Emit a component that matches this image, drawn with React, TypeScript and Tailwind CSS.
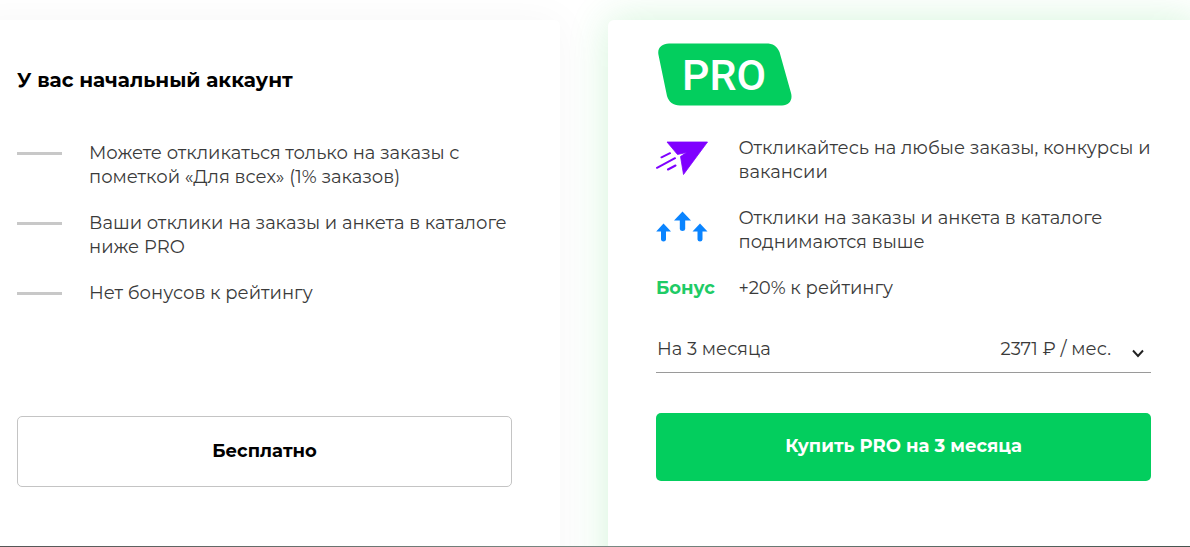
import type { ReactNode } from "react";

const freeItems: string[][] = [
  ["Можете откликаться только на заказы с", "пометкой «Для всех» (1% заказов)"],
  ["Ваши отклики на заказы и анкета в каталоге", "ниже PRO"],
  ["Нет бонусов к рейтингу"],
];

const proItems: { icon: ReactNode; lines: string[] }[] = [
  {
    icon: <PlaneIcon />,
    lines: ["Откликайтесь на любые заказы, конкурсы и", "вакансии"],
  },
  {
    icon: <ArrowsIcon />,
    lines: ["Отклики на заказы и анкета в каталоге", "поднимаются выше"],
  },
  {
    icon: <span className="text-[18px] font-bold leading-6 text-[#1fcb66]">Бонус</span>,
    lines: ["+20% к рейтингу"],
  },
];

export default function App() {
  return (
    <main className="relative h-[547px] overflow-hidden bg-white font-['Montserrat','Inter',sans-serif] text-[#3a3a3a]">
      <div className="-ml-[31px] flex w-[1230px] gap-12 pt-5">
        {/* starter plan */}
        <section className="h-[600px] w-[591px] shrink-0 rounded-md bg-white px-12 pt-[45px] shadow-[0_0_40px_rgba(0,0,0,0.04)]">
          <h2 className="whitespace-nowrap text-[20px] font-bold leading-[30px] text-black">
            У вас начальный аккаунт
          </h2>
          <ul className="mt-[46px] flex h-[275px] flex-col gap-[22px]">
            {freeItems.map((lines) => (
              <li key={lines[0]} className="flex">
                <span className="mt-[11px] h-[3px] w-[45px] shrink-0 bg-[#c8c8c8]" />
                <TextLines lines={lines} className="ml-[27px]" />
              </li>
            ))}
          </ul>
          <button className="h-[71px] w-full rounded-[5px] border border-[#c4c4c4] text-[18px] font-bold text-black">
            Бесплатно
          </button>
        </section>

        {/* PRO plan */}
        <section className="h-[600px] w-[591px] shrink-0 rounded-md bg-white px-12 pt-[23px] shadow-[0_0_40px_rgba(40,205,70,0.2)]">
          <ProBadge />
          <ul className="mt-[30px] flex flex-col gap-[22px]">
            {proItems.map(({ icon, lines }) => (
              <li key={lines[0]} className="flex">
                <div className="w-[82.5px] shrink-0">{icon}</div>
                <TextLines lines={lines} />
              </li>
            ))}
          </ul>
          <button className="mt-[34px] flex h-[38px] w-full items-start whitespace-nowrap border-b border-[#9a9a9a] pl-px pt-[2px] text-left text-[18px] leading-6">
            <span>На 3 месяца</span>
            <span className="ml-auto">2371 ₽ / мес.</span>
            <svg className="ml-[21px] mr-[7px] mt-[12px] h-[9px] w-[12px]" viewBox="0 0 12 9" fill="none" stroke="#222" strokeWidth="1.9">
              <path d="M1 1.5 6 7 11 1.5" />
            </svg>
          </button>
          <button className="mt-[39.5px] h-[68px] w-full rounded-[5px] bg-[#03ce5e] text-[18px] font-bold text-white">
            Купить PRO на 3 месяца
          </button>
        </section>
      </div>
      <div className="absolute inset-x-0 bottom-0 h-px bg-gradient-to-r from-[#555] via-[#7b8a84] to-[#46544f]" />
    </main>
  );
}

function TextLines({ lines, className }: { lines: string[]; className?: string }) {
  return (
    <p className={className}>
      {lines.map((line) => (
        <span key={line} className="block whitespace-nowrap text-[18px] leading-6">
          {line}
        </span>
      ))}
    </p>
  );
}

function ProBadge() {
  return (
    <svg className="ml-[2px] block h-[63px] w-[134px]" viewBox="0 0 134 63">
      <path
        d="M11 0.5H108C115 0.5 119 3 121.5 9L133 50C135 57 131 62.5 124 62.5H22C15 62.5 11 59 9 53L0.5 12C-1 5 4 0.5 11 0.5Z"
        fill="#03ce5e"
      />
      <text
        x="24"
        y="47"
        fill="#fff"
        fontFamily="Roboto, sans-serif"
        fontSize="42"
        fontWeight="500"
        textLength="84"
        lengthAdjust="spacingAndGlyphs"
      >
        PRO
      </text>
    </svg>
  );
}

function PlaneIcon() {
  return (
    <svg className="mt-[5px] h-[35px] w-[53px]" viewBox="0 0 53 35">
      <path
        d="M11 1H51.5L27.5 33.5 24.5 15.5 30.5 11.5 21.5 13.5Z"
        fill="#7f00ff"
        stroke="#7f00ff"
        strokeWidth="0.8"
        strokeLinejoin="round"
      />
      <path
        d="M5.5 16.3 14 12.2M1 26.8 19 17.2M12 28.5 19.5 24.5"
        fill="none"
        stroke="#7f00ff"
        strokeWidth="2"
        strokeLinecap="round"
      />
    </svg>
  );
}

function ArrowsIcon() {
  return (
    <svg className="mt-[5px] h-[32px] w-[52px]" viewBox="0 0 52 32" fill="#0a84ff">
      <path d="M26.5 0.5 35 9.5H29.2V18Q29 20 26.5 20T23.8 18V9.5H18Z" />
      <path d="M7.5 12.5 15 20.5H10V28.5Q9.8 30.5 7.5 30.5T5 28.5V20.5H0.2Z" />
      <path d="M44 12.5 51.5 20.5H46.5V28.5Q46.3 30.5 44 30.5T41.5 28.5V20.5H36.5Z" />
    </svg>
  );
}
